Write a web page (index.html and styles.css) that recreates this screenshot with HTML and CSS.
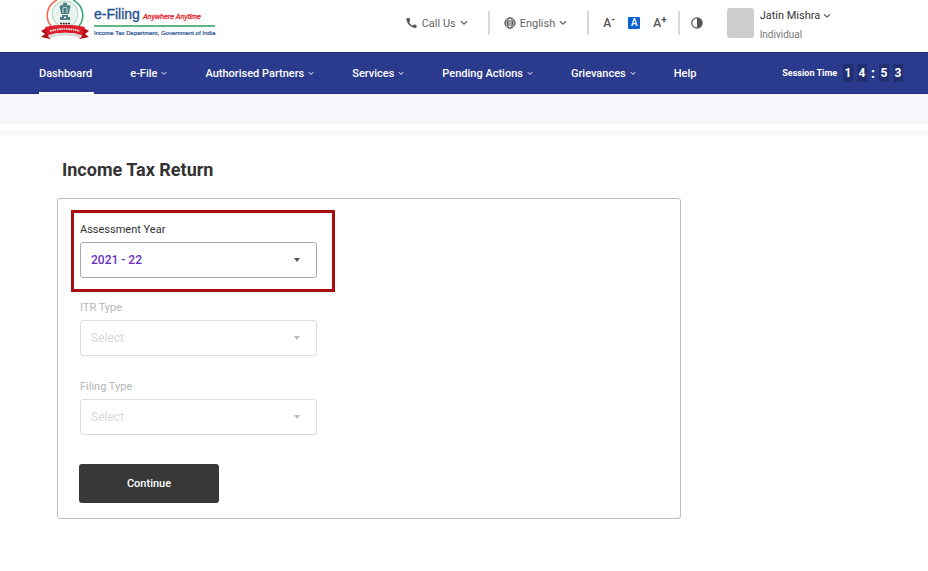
FILE: index.html
```html
<!DOCTYPE html>
<html lang="en">
<head>
  <meta charset="UTF-8">
  <meta name="viewport" content="width=device-width, initial-scale=1.0">
  <title>e-Filing - Income Tax Return</title>
  <link rel="stylesheet" href="styles.css">
</head>
<body>
  <svg width="0" height="0" class="sprite" aria-hidden="true">
    <symbol id="chevron" viewBox="0 0 8 6">
      <path d="M1 1.2 L4 4.2 L7 1.2" fill="none" stroke="currentColor" stroke-width="1.3"/>
    </symbol>
  </svg>

  <header class="topbar">
    <a href="#" class="logo">
      <svg class="emblem" width="50" height="40" viewBox="0 0 50 40" aria-hidden="true">
        <path d="M17 0 A17 17 0 0 0 11 26" fill="none" stroke="#ef6a50" stroke-width="1.6"/>
        <path d="M33 0 A17 17 0 0 1 39 26" fill="none" stroke="#3da873" stroke-width="1.6"/>
        <circle cx="25" cy="14" r="13" fill="#e9f4ee" stroke="#a9d6bf" stroke-width="1"/>
        <g fill="#4d7f86">
          <circle cx="25" cy="5" r="2.4"/>
          <circle cx="21.5" cy="7" r="2"/>
          <circle cx="28.5" cy="7" r="2"/>
          <path d="M20 8 h10 l-1 6 h-8z"/>
          <path d="M22 15 h6 v2 h2 v3 h-10 v-3 h2z"/>
        </g>
        <circle cx="25" cy="17.5" r="1" fill="#fff"/>
        <path d="M23 8 v5 M27 8 v5" stroke="#fff" stroke-width=".7"/>
        <path d="M20 23.5 h10" stroke="#333" stroke-width="1.5" stroke-dasharray="2 .7"/>
        <path d="M1 31 L8 27 L13 33 L10 39 L1 37 L5 34z" fill="#b5121b"/>
        <path d="M49 31 L42 27 L37 33 L40 39 L49 37 L45 34z" fill="#b5121b"/>
        <path d="M5 27 Q25 22.5 45 27 L42 35 Q25 30.5 8 35z" fill="#dc1f2b"/>
        <path d="M10 31 Q25 27 40 31" fill="none" stroke="#fff" stroke-width="1.6" stroke-dasharray="1.5 .8"/>
        <path d="M8 35 Q25 30.5 42 35 L41 38 Q25 33.5 9 38z" fill="#d9dddb"/>
      </svg>
      <span class="brand">
        <span class="brand-top">
          <span class="brand-name">e-Filing</span>
          <span class="brand-motto">Anywhere Anytime</span>
        </span>
        <span class="brand-sub">Income Tax Department, Government of India</span>
      </span>
    </a>

    <div class="tools">
      <button type="button" class="tool call">
        <svg width="12" height="12" viewBox="0 0 24 24"><path fill="#555" d="M6.6 10.8c1.4 2.8 3.8 5.1 6.6 6.6l2.2-2.2c.3-.3.7-.4 1-.2 1.1.4 2.3.6 3.6.6.6 0 1 .4 1 1V21c0 .6-.4 1-1 1C9.6 22 1 13.4 1 3c0-.6.4-1 1-1h4.5c.6 0 1 .4 1 1 0 1.3.2 2.500.6 3.6.1.3 0 .7-.2 1z"/></svg>
        <span>Call Us</span>
        <svg class="chev" width="8" height="6"><use href="#chevron"/></svg>
      </button>
      <button type="button" class="tool lang">
        <svg width="12" height="12" viewBox="0 0 12 12" fill="none" stroke="#555" stroke-width="1"><circle cx="6" cy="6" r="5.2"/><ellipse cx="6" cy="6" rx="2.4" ry="5.2"/><path d="M1 4 H11 M.8 6 H11.2 M1 8 H11"/></svg>
        <span>English</span>
        <svg class="chev" width="8" height="6"><use href="#chevron"/></svg>
      </button>
      <div class="sizes">
        <button type="button" aria-label="Decrease text size">A<sup>-</sup></button>
        <button type="button" class="active" aria-label="Normal text size">A</button>
        <button type="button" aria-label="Increase text size">A<sup>+</sup></button>
      </div>
      <button type="button" class="contrast" aria-label="Contrast">
        <svg width="12" height="12" viewBox="0 0 12 12"><circle cx="6" cy="6" r="5.2" fill="#fff" stroke="#555" stroke-width="1.2"/><path d="M6 1 A5 5 0 0 1 6 11z" fill="#555"/></svg>
      </button>
      <div class="profile">
        <span class="avatar"></span>
        <div class="user">
          <button type="button" class="user-name">Jatin Mishra <svg class="chev" width="8" height="6"><use href="#chevron"/></svg></button>
          <div class="user-role">Individual</div>
        </div>
      </div>
    </div>
  </header>

  <nav class="menu">
    <a href="#" class="active">Dashboard</a>
    <a href="#">e-File <svg width="6" height="5"><use href="#chevron"/></svg></a>
    <a href="#">Authorised Partners <svg width="6" height="5"><use href="#chevron"/></svg></a>
    <a href="#">Services <svg width="6" height="5"><use href="#chevron"/></svg></a>
    <a href="#">Pending Actions <svg width="6" height="5"><use href="#chevron"/></svg></a>
    <a href="#">Grievances <svg width="6" height="5"><use href="#chevron"/></svg></a>
    <a href="#">Help</a>
    <div class="session">
      <span class="session-label">Session Time</span>
      <span class="digit">1</span>
      <span class="digit">4</span>
      <span class="colon">:</span>
      <span class="digit">5</span>
      <span class="digit">3</span>
    </div>
  </nav>
  <div class="subbar"></div>

  <main>
    <h1>Income Tax Return</h1>
    <form class="card">
      <div class="field highlight">
        <label for="year">Assessment Year</label>
        <div class="select">
          <select id="year">
            <option>2021 - 22</option>
          </select>
        </div>
      </div>
      <div class="field">
        <label for="itr-type">ITR Type</label>
        <div class="select">
          <select id="itr-type" disabled>
            <option>Select</option>
          </select>
        </div>
      </div>
      <div class="field">
        <label for="filing-type">Filing Type</label>
        <div class="select">
          <select id="filing-type" disabled>
            <option>Select</option>
          </select>
        </div>
      </div>
      <button type="button" class="continue">Continue</button>
    </form>
  </main>
</body>
</html>
```
FILE: styles.css
```css
* {
  box-sizing: border-box;
}

body {
  margin: 0;
  background: #fff;
  color: #333;
  font-family: Roboto, Arial, sans-serif;
  font-size: 12px;
}

a {
  color: inherit;
  text-decoration: none;
}

button {
  font-family: inherit;
  padding: 0;
  border: none;
  background: none;
  cursor: pointer;
}

.sprite {
  position: absolute;
}

/* top bar */
.topbar {
  display: flex;
  justify-content: space-between;
  height: 52px;
  padding: 0 97px 0 40px;
}

.logo {
  display: flex;
  gap: 4px;
}

.brand {
  display: flex;
  flex-direction: column;
  padding-top: 6px;
  font-family: "Liberation Sans", Arial, sans-serif;
  white-space: nowrap;
}

.brand-top {
  display: flex;
  align-items: baseline;
  gap: 3px;
  line-height: 16px;
  border-bottom: 2px solid #5fb884;
}

.brand-name {
  font-size: 14px;
  color: #1d4f91;
  -webkit-text-stroke: 0.3px #1d4f91;
}

.brand-motto {
  font-size: 7px;
  font-style: italic;
  color: #e3242b;
  -webkit-text-stroke: 0.3px #e3242b;
}

.brand-sub {
  font-size: 6px;
  line-height: 13px;
  color: #1d4f91;
  -webkit-text-stroke: 0.2px #1d4f91;
}

.tools {
  display: flex;
  align-items: center;
  height: 46px;
  color: #666;
}

.tool {
  display: flex;
  align-items: center;
  gap: 4px;
  height: 24px;
  font-size: 11px;
  color: #666;
}

.chev {
  color: #666;
}

.call,
.lang,
.sizes {
  padding-right: 20px;
  border-right: 2px solid #d8d8d8;
}

.lang,
.sizes {
  padding-left: 14px;
}

.sizes {
  display: flex;
  align-items: center;
  gap: 13px;
  height: 24px;
  padding-right: 11px;
}

.sizes button {
  height: 12px;
  font-size: 12px;
  font-weight: 500;
  line-height: 12px;
  color: #555;
}

.sizes sup {
  font-size: 10px;
  line-height: 0;
  font-weight: 700;
  vertical-align: 4px;
}

.sizes .active {
  width: 12px;
  border-radius: 1px;
  background: #0b62d0;
  color: #fff;
  font-size: 10px;
}

.contrast {
  height: 12px;
  margin: 0 24px 0 11px;
  line-height: 0;
}

.profile {
  display: flex;
  align-items: center;
  gap: 6px;
}

.user {
  padding-top: 3px;
}

.avatar {
  width: 27px;
  height: 30px;
  border-radius: 3px;
  background: #cdcdcd;
}

.user-name {
  font-size: 11px;
  line-height: 19px;
  color: #333;
}

.user-role {
  font-size: 10px;
  line-height: 19px;
  color: #777;
}

/* main menu */
.menu {
  display: flex;
  align-items: center;
  gap: 38px;
  height: 42px;
  padding: 0 25px 0 39px;
  background: #2a3a8c;
  border-top: 1px solid #1f2e80;
  border-bottom: 1px solid #1f2e80;
  color: #fff;
  font-size: 11px;
  font-weight: 500;
  white-space: nowrap;
}

.menu a {
  display: flex;
  align-items: center;
  gap: 4px;
  height: 42px;
}

.menu .active {
  margin-right: -2px;
  padding-right: 2px;
  border-top: 2px solid transparent;
  border-bottom: 2px solid #fff;
}

.session {
  display: flex;
  align-items: center;
  gap: 4px;
  margin-left: auto;
}

.session-label {
  margin-right: 2px;
  font-size: 9px;
  font-weight: 700;
}

.digit {
  width: 10px;
  background: #212e70;
  font-size: 12px;
  font-weight: 700;
  line-height: 18px;
  text-align: center;
}

.colon {
  font-size: 14px;
  font-weight: 700;
}

.subbar {
  height: 30px;
  background: #f5f7fb;
}

/* form */
main {
  margin-top: 7px;
  padding: 28px 57px 52px;
  background: linear-gradient(#f8f8f8, #fff 8px);
}

h1 {
  margin: 0 0 18px 5px;
  font-size: 18px;
  font-weight: 700;
  line-height: 21px;
}

.card {
  max-width: 624px;
  padding: 11px 13px 15px;
  border: 1px solid #bdbdbd;
  border-radius: 3px;
}

.field {
  width: 264px;
  padding: 0 18px 0 9px;
  margin-bottom: 23px;
}

.highlight {
  padding: 9px 15px 11px 6px;
  margin-bottom: 8px;
  border: 3px solid #a80d10;
}

.field label {
  display: block;
  margin-bottom: 4px;
  font-size: 11px;
  line-height: 16px;
  color: #b5b5b5;
}

.highlight label {
  color: #333;
}

.select {
  position: relative;
}

.select::after {
  content: "";
  position: absolute;
  top: 16px;
  right: 17px;
  border: 3px solid transparent;
  border-top: 4px solid #555;
  border-bottom: none;
  pointer-events: none;
}

.select:has(select:disabled)::after {
  border-top-color: #bbb;
}

.select select {
  display: block;
  appearance: none;
  width: 100%;
  height: 36px;
  padding: 0 10px;
  border: 1px solid #aaa;
  border-radius: 3px;
  background: #fff;
  color: #6a2fc4;
  font-family: inherit;
  font-size: 12px;
  opacity: 1;
}

.select select:not(:disabled) {
  font-weight: 500;
}

.select select:disabled {
  border-color: #ddd;
  color: #d8d8d8;
}

.continue {
  display: block;
  width: 140px;
  height: 39px;
  margin: 29px 0 0 8px;
  border-radius: 3px;
  background: #383838;
  color: #fff;
  font-size: 11px;
  font-weight: 500;
}
```
